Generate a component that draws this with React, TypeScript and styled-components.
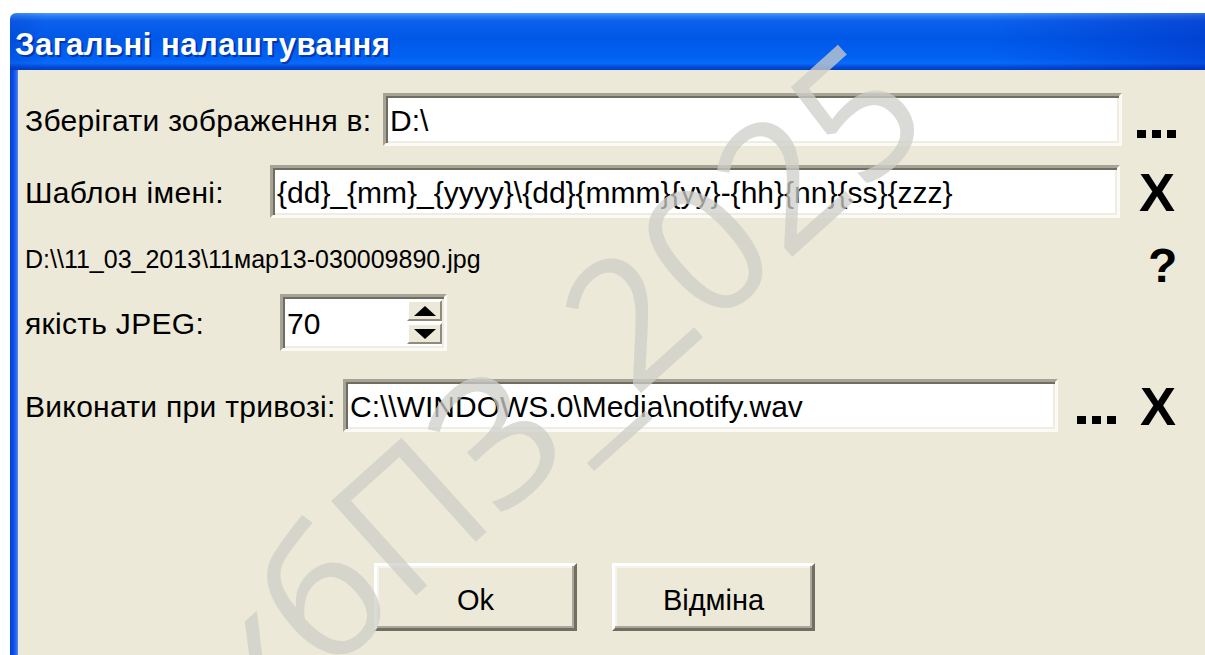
import React from 'react';
import styled, { createGlobalStyle } from 'styled-components';

const GlobalStyle = createGlobalStyle`
  html, body {
    margin: 0;
    padding: 0;
    background: #ffffff;
  }
  body {
    font-family: "Liberation Sans", Arial, sans-serif;
  }
`;

const App: React.FC = () => {
  return (
    <>
      <GlobalStyle />
      <Page>
        <Window>
          <TitleBar>
            <Title>Загальні налаштування</Title>
          </TitleBar>

          <Frame>
            <LeftEdge />
            <Body>
              <Row $h={53} $mt={0}>
                <Label $w={358}>Зберігати зображення в:</Label>
                <Field $w={739}>D:\</Field>
                <Dots $ml={15}>
                  <span />
                  <span />
                  <span />
                </Dots>
              </Row>

              <Row $h={53} $mt={19}>
                <Label $w={245}>Шаблон імені:</Label>
                <Field $w={850}>
                  {'{dd}_{mm}_{yyyy}\\{dd}{mmm}{yy}-{hh}{nn}{ss}{zzz}'}
                </Field>
                <Cross $ml={19}>X</Cross>
              </Row>

              <Row $h={45} $mt={24}>
                <Preview>D:\\11_03_2013\11мар13-030009890.jpg</Preview>
                <Help>?</Help>
              </Row>

              <Row $h={57} $mt={7}>
                <Label $w={255}>якість JPEG:</Label>
                <Field $w={167}>
                  <SpinValue>70</SpinValue>
                  <SpinButtons>
                    <SpinButton>
                      <Arrow $up />
                    </SpinButton>
                    <SpinButton>
                      <Arrow />
                    </SpinButton>
                  </SpinButtons>
                </Field>
              </Row>

              <Row $h={53} $mt={28}>
                <Label $w={318}>Виконати при тривозі:</Label>
                <Field $w={715}>C:\\WINDOWS.0\Media\notify.wav</Field>
                <Dots $ml={19}>
                  <span />
                  <span />
                  <span />
                </Dots>
                <Cross $ml={24}>X</Cross>
              </Row>

              <ButtonRow>
                <PushButton>Ok</PushButton>
                <PushButton>Відміна</PushButton>
              </ButtonRow>
            </Body>
          </Frame>
        </Window>

        <Watermark>хбПЗ_2025</Watermark>
      </Page>
    </>
  );
};

const Page = styled.div`
  position: relative;
  width: 1205px;
  height: 655px;
  overflow: hidden;
  background: #ffffff;
  padding: 13px 0 0 10px;
  box-sizing: border-box;
`;

const Window = styled.div`
  display: flex;
  flex-direction: column;
  height: 100%;
`;

const TitleBar = styled.div`
  height: 57px;
  flex: none;
  display: flex;
  align-items: center;
  padding: 6px 0 0 5px;
  box-sizing: border-box;
  border-top-left-radius: 6px;
  background:
    linear-gradient(to right, rgba(0, 20, 150, 0.15) 0, transparent 3%, transparent 82%, rgba(0, 25, 170, 0.35) 100%),
    linear-gradient(
      to bottom,
      #4a9bff 0,
      #2a7cf5 3px,
      #0c60ec 8px,
      #0058e8 45%,
      #0262f4 80%,
      #0a6bfb 88%,
      #004bd6 95%,
      #003ec4 100%
    );
`;

const Title = styled.h1`
  margin: 0;
  font-family: "Liberation Sans", Arial, sans-serif;
  font-size: 31px;
  font-weight: bold;
  color: #ffffff;
  letter-spacing: 0.5px;
  text-shadow: 2px 2px 0 rgba(0, 24, 120, 0.55);
`;

const Frame = styled.div`
  flex: 1;
  display: flex;
  min-height: 0;
`;

const LeftEdge = styled.div`
  width: 8px;
  flex: none;
  background: linear-gradient(to right, #0b3fd8 0, #0a4ce8 40%, #2c6cf0 80%, #5d8cf0 100%);
`;

const Body = styled.div`
  flex: 1;
  background: #ece9d8;
  padding: 23px 0 0 7px;
  display: flex;
  flex-direction: column;
`;

const Row = styled.div<{ $h: number; $mt: number }>`
  display: flex;
  align-items: center;
  height: ${({ $h }) => $h}px;
  margin-top: ${({ $mt }) => $mt}px;
  flex: none;
`;

const Label = styled.span<{ $w: number }>`
  width: ${({ $w }) => $w}px;
  flex: none;
  font-size: 30px;
  letter-spacing: 0.3px;
  color: #000000;
  white-space: nowrap;
  padding-top: 2px;
`;

const Field = styled.div<{ $w: number }>`
  width: ${({ $w }) => $w}px;
  height: 100%;
  flex: none;
  box-sizing: border-box;
  display: flex;
  align-items: center;
  padding: 2px 0 0 4px;
  background: #ffffff;
  border-style: solid;
  border-width: 3px;
  border-color: #a7a496 #fbfaf5 #fbfaf5 #a7a496;
  box-shadow: inset 2px 2px 0 #6f6d62, inset -2px -2px 0 #efede3;
  font-size: 30px;
  color: #000000;
  white-space: nowrap;
  overflow: hidden;
`;

const SpinValue = styled.span`
  flex: 1;
`;

const SpinButtons = styled.div`
  width: 35px;
  align-self: stretch;
  display: flex;
  flex-direction: column;
  gap: 2px;
  margin: 1px 2px 4px 0;
`;

const SpinButton = styled.div`
  flex: 1;
  display: flex;
  align-items: center;
  justify-content: center;
  background: #ece9d8;
  border-style: solid;
  border-width: 2px;
  border-color: #ffffff #8f8c7e #8f8c7e #ffffff;
`;

const Arrow = styled.span<{ $up?: boolean }>`
  width: 0;
  height: 0;
  border-left: 11px solid transparent;
  border-right: 11px solid transparent;
  ${({ $up }) =>
    $up ? 'border-bottom: 10px solid #000000;' : 'border-top: 10px solid #000000;'}
`;

// three square dots of the browse button
const Dots = styled.div<{ $ml: number }>`
  display: flex;
  gap: 6px;
  align-self: flex-end;
  margin-left: ${({ $ml }) => $ml}px;
  margin-bottom: 8px;

  span {
    width: 9px;
    height: 8px;
    background: #000000;
  }
`;

const Cross = styled.span<{ $ml: number }>`
  margin-left: ${({ $ml }) => $ml}px;
  font-size: 54px;
  font-weight: bold;
  line-height: 1;
  color: #000000;
`;

const Preview = styled.span`
  width: 1123px;
  flex: none;
  font-size: 25px;
  color: #000000;
  white-space: nowrap;
  align-self: flex-start;
  padding-top: 3px;
`;

const Help = styled.span`
  font-size: 48px;
  font-weight: bold;
  line-height: 1;
  color: #000000;
  align-self: flex-start;
`;

const ButtonRow = styled.div`
  display: flex;
  gap: 35px;
  margin-top: 131px;
  padding-left: 349px;
`;

const PushButton = styled.button`
  width: 203px;
  height: 68px;
  box-sizing: border-box;
  background: #ece9d8;
  border-style: solid;
  border-width: 3px;
  border-color: #ffffff #716f64 #716f64 #ffffff;
  box-shadow: inset -2px -2px 0 #aca899, inset 2px 2px 0 #f4f3ee;
  font-family: "Liberation Sans", Arial, sans-serif;
  font-size: 29px;
  color: #000000;
  padding: 6px 0 0;
  cursor: pointer;
`;

const Watermark = styled.div`
  position: absolute;
  left: 550px;
  top: 382px;
  transform: translate(-50%, -50%) rotate(-42deg);
  font-family: "Open Sans", "DejaVu Sans", sans-serif;
  font-size: 178px;
  font-weight: 500;
  color: rgba(205, 205, 200, 0.75);
  white-space: nowrap;
  pointer-events: none;
  user-select: none;
`;

export default App;
